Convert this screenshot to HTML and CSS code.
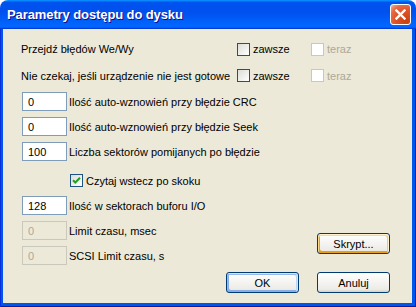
FILE: index.html
```html
<!DOCTYPE html>
<html lang="pl">
<head>
    <meta charset="UTF-8">
    <meta name="viewport" content="width=device-width, initial-scale=1.0">
    <title>Parametry dostępu do dysku</title>
    <link rel="stylesheet" href="styles.css">
</head>
<body>
    <div class="window">
        <div class="title-bar">
            <span class="title-text">Parametry dostępu do dysku</span>
            <button class="close-btn" aria-label="Zamknij">
                <svg width="11" height="11" viewBox="0 0 11 11">
                    <path d="M1.5 1.5 L9.5 9.5 M9.5 1.5 L1.5 9.5" stroke="#fff" stroke-width="2.4" stroke-linecap="square"/>
                </svg>
            </button>
        </div>

        <div class="frame">
            <div class="client">
                <div class="opt-row">
                    <span>Przejdź błędów We/Wy</span>
                    <label class="check"><span class="box"></span>zawsze</label>
                    <label class="check disabled"><span class="box"></span>teraz</label>
                </div>
                <div class="opt-row">
                    <span>Nie czekaj, jeśli urządzenie nie jest gotowe</span>
                    <label class="check"><span class="box"></span>zawsze</label>
                    <label class="check disabled"><span class="box"></span>teraz</label>
                </div>

                <div class="field-row">
                    <span class="edit">0</span>
                    <span>Ilość auto-wznowień przy błędzie CRC</span>
                </div>
                <div class="field-row">
                    <span class="edit">0</span>
                    <span>Ilość auto-wznowień przy błędzie Seek</span>
                </div>
                <div class="field-row">
                    <span class="edit">100</span>
                    <span>Liczba sektorów pomijanych po błędzie</span>
                </div>
                <div class="field-row check-row">
                    <label class="check">
                        <span class="box">
                            <svg width="11" height="11" viewBox="0 0 11 11">
                                <path d="M2 5.2 L4.3 7.5 L9 2.8" fill="none" stroke="#21a121" stroke-width="2"/>
                            </svg>
                        </span>Czytaj wstecz po skoku
                    </label>
                </div>

                <div class="lower">
                    <div class="lower-fields">
                        <div class="field-row">
                            <span class="edit">128</span>
                            <span>Ilość w sektorach buforu I/O</span>
                        </div>
                        <div class="field-row">
                            <span class="edit disabled">0</span>
                            <span>Limit czasu, msec</span>
                        </div>
                        <div class="field-row">
                            <span class="edit disabled">0</span>
                            <span>SCSI Limit czasu, s</span>
                        </div>
                    </div>
                    <div class="lower-side">
                        <button class="btn hot">Skrypt...</button>
                    </div>
                </div>

                <div class="footer">
                    <button class="btn default">OK</button>
                    <button class="btn">Anuluj</button>
                </div>
            </div>
        </div>
    </div>
</body>
</html>
```

FILE: styles.css
```css
:root {
    --dialog-bg: #ece9d8;
    --frame-blue: #0055ea;
    --text: #000;
    --text-disabled: #aca899;
    --edit-border: #7f9db9;
    --disabled-border: #cac8bb;
    --check-border: #1d5281;
}

* {
    margin: 0;
    padding: 0;
    box-sizing: border-box;
}

body {
    background-color: #fff;
    font-family: 'Liberation Sans', Arial, sans-serif;
    font-size: 11px;
    color: var(--text);
}

.window {
    width: 416px;
    height: 307px;
    display: flex;
    flex-direction: column;
    border-radius: 8px 8px 0 0;
    overflow: hidden;
}

/* title bar */

.title-bar {
    height: 29px;
    flex-shrink: 0;
    display: flex;
    align-items: center;
    justify-content: space-between;
    padding: 0 5px 0 7px;
    background: linear-gradient(180deg, #0997ff, #0053ee 8%, #0050ee 40%, #06f 88%, #06f 93%, #005bff 95%, #003dd7 96%, #003dd7);
}

.title-text {
    font-size: 13px;
    font-weight: 700;
    color: #fff;
    text-shadow: 1px 1px #0f1089;
    letter-spacing: -0.1px;
}

.close-btn {
    width: 21px;
    height: 21px;
    display: flex;
    align-items: center;
    justify-content: center;
    border: 1px solid #fff;
    border-radius: 3px;
    background: radial-gradient(circle at 80% 85%, #c8410f 0, #e0532a 50%, #e66d47 75%, #f5b59c 100%);
}

/* frame + client */

.frame {
    flex: 1;
    display: flex;
    padding: 0 4px 4px 3px;
    background-color: var(--frame-blue);
    box-shadow: inset 1px 0 #0831d9, inset -1px -1px #001ea0;
}

.client {
    flex: 1;
    display: flex;
    flex-direction: column;
    padding: 7px 22px 0 18px;
    background-color: var(--dialog-bg);
}

.opt-row {
    display: grid;
    grid-template-columns: 216px 74px auto;
    align-items: center;
    height: 26.5px;
}

.field-row {
    display: flex;
    align-items: center;
    gap: 2px;
    height: 25px;
}

.check-row {
    margin-top: 4px;
    padding-left: 49px;
}

/* controls */

.edit {
    width: 45px;
    height: 19px;
    margin-left: 1px;
    padding-left: 5px;
    display: flex;
    align-items: center;
    background-color: #fff;
    border: 1px solid var(--edit-border);
}

.edit.disabled {
    background-color: var(--dialog-bg);
    border-color: var(--disabled-border);
    color: var(--text-disabled);
}

.check {
    display: flex;
    align-items: center;
    gap: 3px;
}

.check .box {
    width: 13px;
    height: 13px;
    display: flex;
    align-items: center;
    justify-content: center;
    border: 1px solid var(--check-border);
    background: linear-gradient(135deg, #dcdcd7, #fff);
}

.check.disabled {
    color: var(--text-disabled);
}

.check.disabled .box {
    border-color: var(--disabled-border);
    background: #fff;
}

.lower {
    display: flex;
    justify-content: space-between;
}

.lower-side {
    padding-top: 40px;
}

.btn {
    width: 73px;
    height: 21px;
    font-family: inherit;
    font-size: 11px;
    color: var(--text);
    border: 1px solid #003c74;
    border-radius: 3px;
    background: linear-gradient(180deg, #fff, #ecebe6 86%, #d6d0c5);
}

.btn.hot {
    box-shadow: inset -1px 1px #fff0cf, inset 1px 2px #fdd889, inset -2px 2px #fbc761, inset 2px -2px #e5a01a;
}

.btn.default {
    box-shadow: inset -1px 1px #cee7ff, inset 1px 2px #98b8ea, inset -2px 2px #bcd4f6, inset 1px -1px #89ade4, inset 2px -2px #89ade4;
}

.footer {
    display: flex;
    justify-content: flex-end;
    gap: 18px;
    margin-top: 4px;
}
```
